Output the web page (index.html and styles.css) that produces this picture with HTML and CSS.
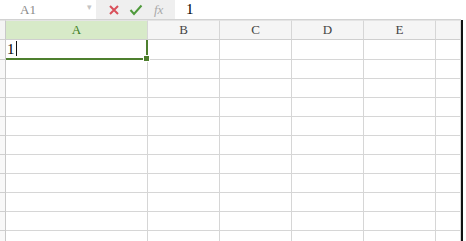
FILE: index.html
```html
<!DOCTYPE html>
<html>
<head>
    <meta charset="utf-8">
    <title>Sheet</title>
    <link rel="stylesheet" href="styles.css">
</head>
<body>
    <div class="formula-bar">
        <div class="name-box">
            <span class="cell-ref">A1</span>
            <span class="drop">&#9662;</span>
        </div>
        <div class="func-box">
            <svg class="ico" width="12" height="12" viewBox="0 0 12 12">
                <path d="M2 2 L10 10 M10 2 L2 10" stroke="#d9505a" stroke-width="2" fill="none"/>
            </svg>
            <svg class="ico" width="14" height="12" viewBox="0 0 14 12">
                <path d="M1.5 6 L5 10 L12.5 1.5" stroke="#4f9a3c" stroke-width="2" fill="none"/>
            </svg>
            <span class="fx">fx</span>
        </div>
        <div class="formula-input">1</div>
    </div>

    <div class="sheet">
        <div class="corner"></div>
        <div class="col-head active">A</div>
        <div class="col-head">B</div>
        <div class="col-head">C</div>
        <div class="col-head">D</div>
        <div class="col-head">E</div>
        <div class="col-head"></div>

        <div class="row-head"></div>
        <div class="cell editing">1<span class="caret"></span><span class="handle"></span></div>
        <div class="cell"></div>
        <div class="cell"></div>
        <div class="cell"></div>
        <div class="cell"></div>
        <div class="cell"></div>
    </div>
    <script>
        // fill the empty rows below row 1
        var sheet = document.querySelector('.sheet');
        for (var r = 0; r < 10; r++) {
            var rh = document.createElement('div');
            rh.className = 'row-head';
            sheet.appendChild(rh);
            for (var c = 0; c < 6; c++) {
                var cell = document.createElement('div');
                cell.className = 'cell';
                sheet.appendChild(cell);
            }
        }
    </script>
</body>
</html>
```

FILE: styles.css
```css
body
{
    margin: 0;
    width: 466px;
    height: 241px;
    overflow: hidden;
    background: #ffffff;
    font-family: "Liberation Serif", "DejaVu Serif", serif;
}

.formula-bar
{
    display: flex;
    height: 20px;
    box-sizing: border-box;
    border-bottom: 1px solid #d2d2d2;
    width: 461px;
}

.name-box
{
    width: 96px;
    display: flex;
    align-items: center;
    position: relative;
}

.cell-ref
{
    margin-left: 20px;
    font-size: 13px;
    color: #8a8a8a;
}

.drop
{
    position: absolute;
    left: 87px;
    top: 2px;
    font-size: 9px;
    color: #c4c4c4;
}

.func-box
{
    width: 79px;
    background: #efefef;
    display: flex;
    align-items: center;
    padding-left: 12px;
    box-sizing: border-box;
}

.ico
{
    margin-right: 9px;
}

.fx
{
    font-style: italic;
    font-size: 13px;
    color: #a9a9a9;
    margin-left: 2px;
}

.formula-input
{
    flex: 1;
    padding-left: 11px;
    font-size: 15px;
    line-height: 19px;
    color: #000;
}

.sheet
{
    display: grid;
    grid-template-columns: 6px 142px 72px 72px 72px 72px 25px;
    grid-template-rows: 20px 20px;
    grid-auto-rows: 19px;
    width: 461px;
    border-right: 2px solid #111;
    height: 221px;
    overflow: hidden;
}

.corner
{
    box-sizing: border-box;
    background: #f4f4f4;
    border-right: 1px solid #c8c8c8;
    border-bottom: 1px solid #d0d0d0;
    border-top: 1px solid #e4e4e4;
}

.col-head
{
    box-sizing: border-box;
    background: #f5f5f5;
    border-top: 1px solid #e4e4e4;
    border-right: 1px solid #d6d6d6;
    border-bottom: 1px solid #cfcfcf;
    font-size: 13px;
    color: #444;
    text-align: center;
    line-height: 18px;
}

.col-head.active
{
    background: #d7eac8;
    color: #3d7d22;
}

.row-head
{
    box-sizing: border-box;
    background: #f8f8f8;
    border-right: 1px solid #c8c8c8;
    border-bottom: 1px solid #cfcfcf;
}

.cell
{
    box-sizing: border-box;
    border-right: 1px solid #d6d6d6;
    border-bottom: 1px solid #d6d6d6;
    font-size: 15px;
    line-height: 18px;
    padding-left: 1px;
    color: #000;
}

.cell.editing
{
    position: relative;
    border-right: 2px solid #4e7f2e;
    border-bottom: 2px solid #4e7f2e;
}

.caret
{
    display: inline-block;
    width: 1px;
    height: 15px;
    background: #111;
    vertical-align: -2px;
    margin-left: 1px;
}

.handle
{
    position: absolute;
    right: -4px;
    bottom: -4px;
    width: 5px;
    height: 5px;
    background: #4e7f2e;
    border: 1px solid #fff;
}
```
